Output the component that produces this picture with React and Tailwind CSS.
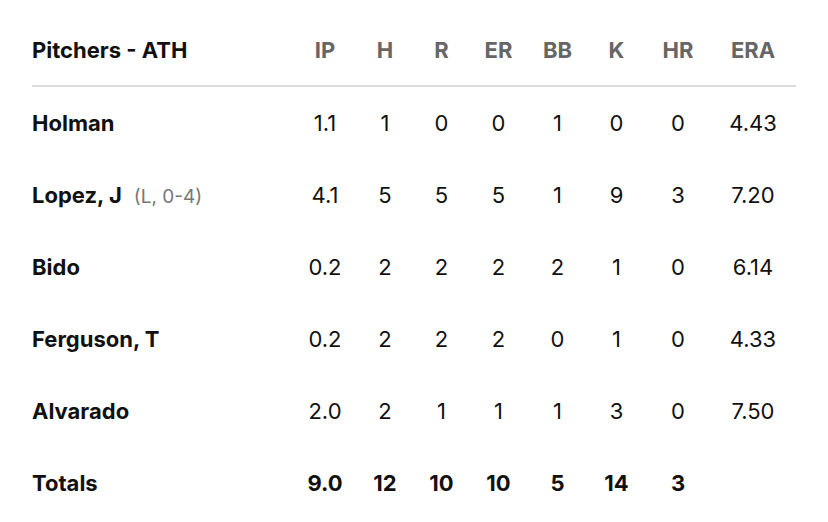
import React from "react";

const cols = ["IP", "H", "R", "ER", "BB", "K", "HR", "ERA"];

const rows = [
  { name: "Holman", stats: ["1.1", "1", "0", "0", "1", "0", "0", "4.43"] },
  { name: "Lopez, J", note: "(L, 0-4)", stats: ["4.1", "5", "5", "5", "1", "9", "3", "7.20"] },
  { name: "Bido", stats: ["0.2", "2", "2", "2", "2", "1", "0", "6.14"] },
  { name: "Ferguson, T", stats: ["0.2", "2", "2", "2", "0", "1", "0", "4.33"] },
  { name: "Alvarado", stats: ["2.0", "2", "1", "1", "1", "3", "0", "7.50"] },
];

const totals = ["9.0", "12", "10", "10", "5", "14", "3", ""];

const grid = "grid grid-cols-[262px_62px_58px_55px_59px_59px_59px_64px_86px] items-center";

export default function App() {
  return (
    <div className="w-[828px] h-[522px] bg-white px-8 pt-[15px] font-['Inter',sans-serif] text-[22px] text-[#111]">
      <div className={`${grid} h-[72px] border-b-2 border-[#dcdcdc] font-bold`}>
        <div>Pitchers - ATH</div>
        {cols.map((c) => (
          <div key={c} className="text-center text-[#666]">
            {c}
          </div>
        ))}
      </div>

      {rows.map((r) => (
        <div key={r.name} className={`${grid} h-[72px]`}>
          <div className="flex items-baseline gap-3">
            <span className="font-bold">{r.name}</span>
            {r.note && <span className="text-[19px] text-[#777]">{r.note}</span>}
          </div>
          {r.stats.map((s, i) => (
            <div key={i} className="text-center">
              {s}
            </div>
          ))}
        </div>
      ))}

      <div className={`${grid} h-[72px] font-bold`}>
        <div>Totals</div>
        {totals.map((s, i) => (
          <div key={i} className="text-center">
            {s}
          </div>
        ))}
      </div>
    </div>
  );
}
